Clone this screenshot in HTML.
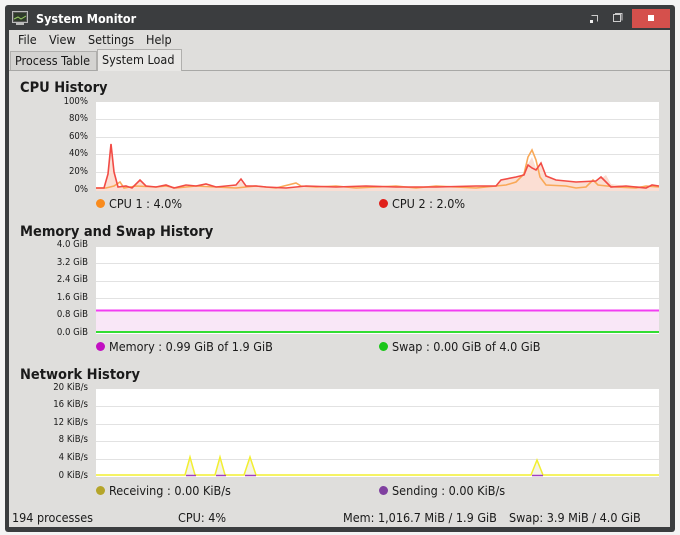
<!DOCTYPE html>
<html><head><meta charset="utf-8"><style>
*{margin:0;padding:0;box-sizing:border-box}
body{width:680px;height:535px;background:#f4f4f4;position:relative;overflow:hidden;font-family:"DejaVu Sans Condensed","DejaVu Sans","Liberation Sans",sans-serif;font-stretch:condensed;color:#1a1a1a}
.win{position:absolute;left:5px;top:5px;width:670px;height:527px;background:#3b3d3f;border-radius:3px}
.title{position:absolute;left:36px;top:11px;color:#fff;font-weight:bold;font-size:12.5px}
.content{position:absolute;left:9px;top:30px;width:661px;height:497px;background:#dfdedc}
.t{position:absolute;font-size:12.5px;white-space:nowrap}
.h{position:absolute;font-weight:bold;font-size:14.5px}
.ax{position:absolute;font-size:9.5px;text-align:right;width:80px;left:8px}
.dot{display:inline-block;width:9px;height:9px;border-radius:50%;margin-right:4px;vertical-align:0}
</style></head><body>
<div class="win"></div>
<svg style="position:absolute;left:12px;top:11px" width="16" height="14"><rect x="0.5" y="0.5" width="15" height="11" fill="#555" stroke="#bbb"/><rect x="2" y="2" width="12" height="8" fill="#2e3a2a"/><path d="M2 8 L6 6 L9 8 L14 5" stroke="#9c6" fill="none"/><rect x="4" y="12" width="8" height="2" fill="#bbb"/></svg>
<div class="title">System Monitor</div>
<svg style="position:absolute;left:588px;top:12px" width="40" height="12"><path d="M3.5 3.5h6v6" stroke="#ccc" fill="none"/><rect x="2" y="8" width="3" height="3" fill="#eee"/><rect x="25.5" y="2.5" width="7" height="7" stroke="#ccc" fill="none"/><path d="M27 1.5h7v7" stroke="#ccc" fill="none"/></svg>
<div style="position:absolute;left:632px;top:9px;width:38px;height:19px;background:#d5504c"></div>
<div style="position:absolute;left:648px;top:15px;width:6px;height:6px;background:#fff"></div>
<div class="content"></div>
<div class="t" style="left:18px;top:32px">File</div>
<div class="t" style="left:49px;top:32px">View</div>
<div class="t" style="left:88px;top:32px">Settings</div>
<div class="t" style="left:146px;top:32px">Help</div>
<div style="position:absolute;left:9px;top:70px;width:661px;height:1px;background:#a8a8a6"></div>
<div style="position:absolute;left:10px;top:51px;width:87px;height:19px;background:#d4d3d1;border:1px solid #b0afad;border-bottom:none"></div>
<div class="t" style="left:15px;top:53px">Process Table</div>
<div style="position:absolute;left:97px;top:49px;width:85px;height:22px;background:#e8e7e5;border:1px solid #b0afad;border-bottom:none"></div>
<div class="t" style="left:102px;top:52px">System Load</div>

<div class="h" style="left:20px;top:80px">CPU History</div>
<div class="ax" style="top:96px">100%</div><div class="ax" style="top:113px">80%</div><div class="ax" style="top:131px">60%</div><div class="ax" style="top:148px">40%</div><div class="ax" style="top:166px">20%</div><div class="ax" style="top:184px">0%</div>
<svg style="position:absolute;left:96px;top:102px" width="563" height="89">
<rect width="563" height="89" fill="#fff"/>
<g stroke="#e2e2e2"><path d="M0 17.5H563M0 35.5H563M0 52.5H563M0 70.5H563"/></g>
<path d="M0 86 L8 86 L12 72 L15 41 L18 72 L22 85 L30 84 L36 86 L44 78 L50 84 L60 85 L70 84 L78 86 L90 84 L100 85 L110 84 L120 86 L130 85 L140 84 L145 79 L150 85 L160 84 L170 85 L190 86 L210 85 L240 85 L270 84 L300 85 L340 85 L380 84 L400 84 L405 78 L420 75 L428 73 L432 62 L436 55 L440 66 L445 62 L450 75 L460 78 L480 80 L500 80 L510 73 L515 82 L530 84 L560 84 L563 84 L563 89 L0 89Z" fill="#fbded3"/>
<polyline fill="none" stroke="#f9a857" stroke-width="1.6" points="0,86 10,86 18,84 24,80 28,86 40,84 60,85 70,84 80,86 100,84 120,85 140,86 160,84 180,86 200,81 205,84 220,85 240,84 260,86 280,85 300,84 320,86 340,84 360,85 380,86 400,84 410,83 420,80 428,72 432,55 436,48 440,58 444,75 450,83 470,84 480,86 490,85 497,78 502,83 520,85 540,86 550,84 563,85"/>
<polyline fill="none" stroke="#f24b45" stroke-width="1.6" points="0,86 8,86 12,72 15,42 18,70 22,85 30,84 36,86 44,78 50,84 60,85 70,83 78,86 90,83 100,84 110,82 120,85 130,84 140,83 145,77 150,84 160,84 170,85 190,86 210,84 240,85 270,84 300,85 340,85 380,84 400,84 405,78 420,75 428,73 432,63 436,66 440,68 445,61 450,74 460,78 480,80 500,79 505,75 515,85 530,84 550,86 556,83 563,84"/>
</svg>
<div class="t" style="left:96px;top:196px"><span class="dot" style="background:#f98b1d"></span>CPU 1 : 4.0%</div>
<div class="t" style="left:379px;top:196px"><span class="dot" style="background:#e0201b"></span>CPU 2 : 2.0%</div>

<div class="h" style="left:20px;top:224px">Memory and Swap History</div>
<div class="ax" style="top:239px">4.0 GiB</div><div class="ax" style="top:257px">3.2 GiB</div><div class="ax" style="top:274px">2.4 GiB</div><div class="ax" style="top:292px">1.6 GiB</div><div class="ax" style="top:309px">0.8 GiB</div><div class="ax" style="top:327px">0.0 GiB</div>
<svg style="position:absolute;left:96px;top:247px" width="563" height="87">
<rect width="563" height="87" fill="#fff"/>
<g stroke="#e2e2e2"><path d="M0 16.5H563M0 34.5H563M0 51.5H563M0 69.5H563"/></g>
<rect x="0" y="64" width="563" height="21" fill="#f9e7f7"/>
<path d="M0 63.5H563" stroke="#f23ef2" stroke-width="2"/>
<path d="M0 85H563" stroke="#33dd33" stroke-width="2"/>
</svg>
<div class="t" style="left:96px;top:339px"><span class="dot" style="background:#c20fc2"></span>Memory : 0.99 GiB of 1.9 GiB</div>
<div class="t" style="left:379px;top:339px"><span class="dot" style="background:#19c619"></span>Swap : 0.00 GiB of 4.0 GiB</div>

<div class="h" style="left:20px;top:367px">Network History</div>
<div class="ax" style="top:382px">20 KiB/s</div><div class="ax" style="top:399px">16 KiB/s</div><div class="ax" style="top:417px">12 KiB/s</div><div class="ax" style="top:434px">8 KiB/s</div><div class="ax" style="top:452px">4 KiB/s</div><div class="ax" style="top:470px">0 KiB/s</div>
<svg style="position:absolute;left:96px;top:389px" width="563" height="88">
<rect width="563" height="88" fill="#fff"/>
<g stroke="#e2e2e2"><path d="M0 17.5H563M0 35.5H563M0 52.5H563M0 70.5H563"/></g>
<path d="M89 86L94 68L99 86ZM119 86L124 68L129 86ZM148 86L154 68L160 86ZM435 86L441 71L447 86Z" fill="#f5f3e6"/>
<polyline fill="none" stroke="#f2ef30" stroke-width="1.5" points="0,86 89,86 94,68 99,86 119,86 124,68 129,86 148,86 154,68 160,86 435,86 441,71 447,86 563,86"/>
<g stroke="#a040c0" stroke-width="1.5"><path d="M90 86.5H100M120 86.5H130M149 86.5H160M436 86.5H447"/></g>
</svg>
<div class="t" style="left:96px;top:483px"><span class="dot" style="background:#b5a52a"></span>Receiving : 0.00 KiB/s</div>
<div class="t" style="left:379px;top:483px"><span class="dot" style="background:#8040a0"></span>Sending : 0.00 KiB/s</div>

<div class="t" style="left:12px;top:510px">194 processes</div>
<div class="t" style="left:178px;top:510px">CPU: 4%</div>
<div class="t" style="left:343px;top:510px">Mem: 1,016.7 MiB / 1.9 GiB</div>
<div class="t" style="left:509px;top:510px">Swap: 3.9 MiB / 4.0 GiB</div>
</body></html>
